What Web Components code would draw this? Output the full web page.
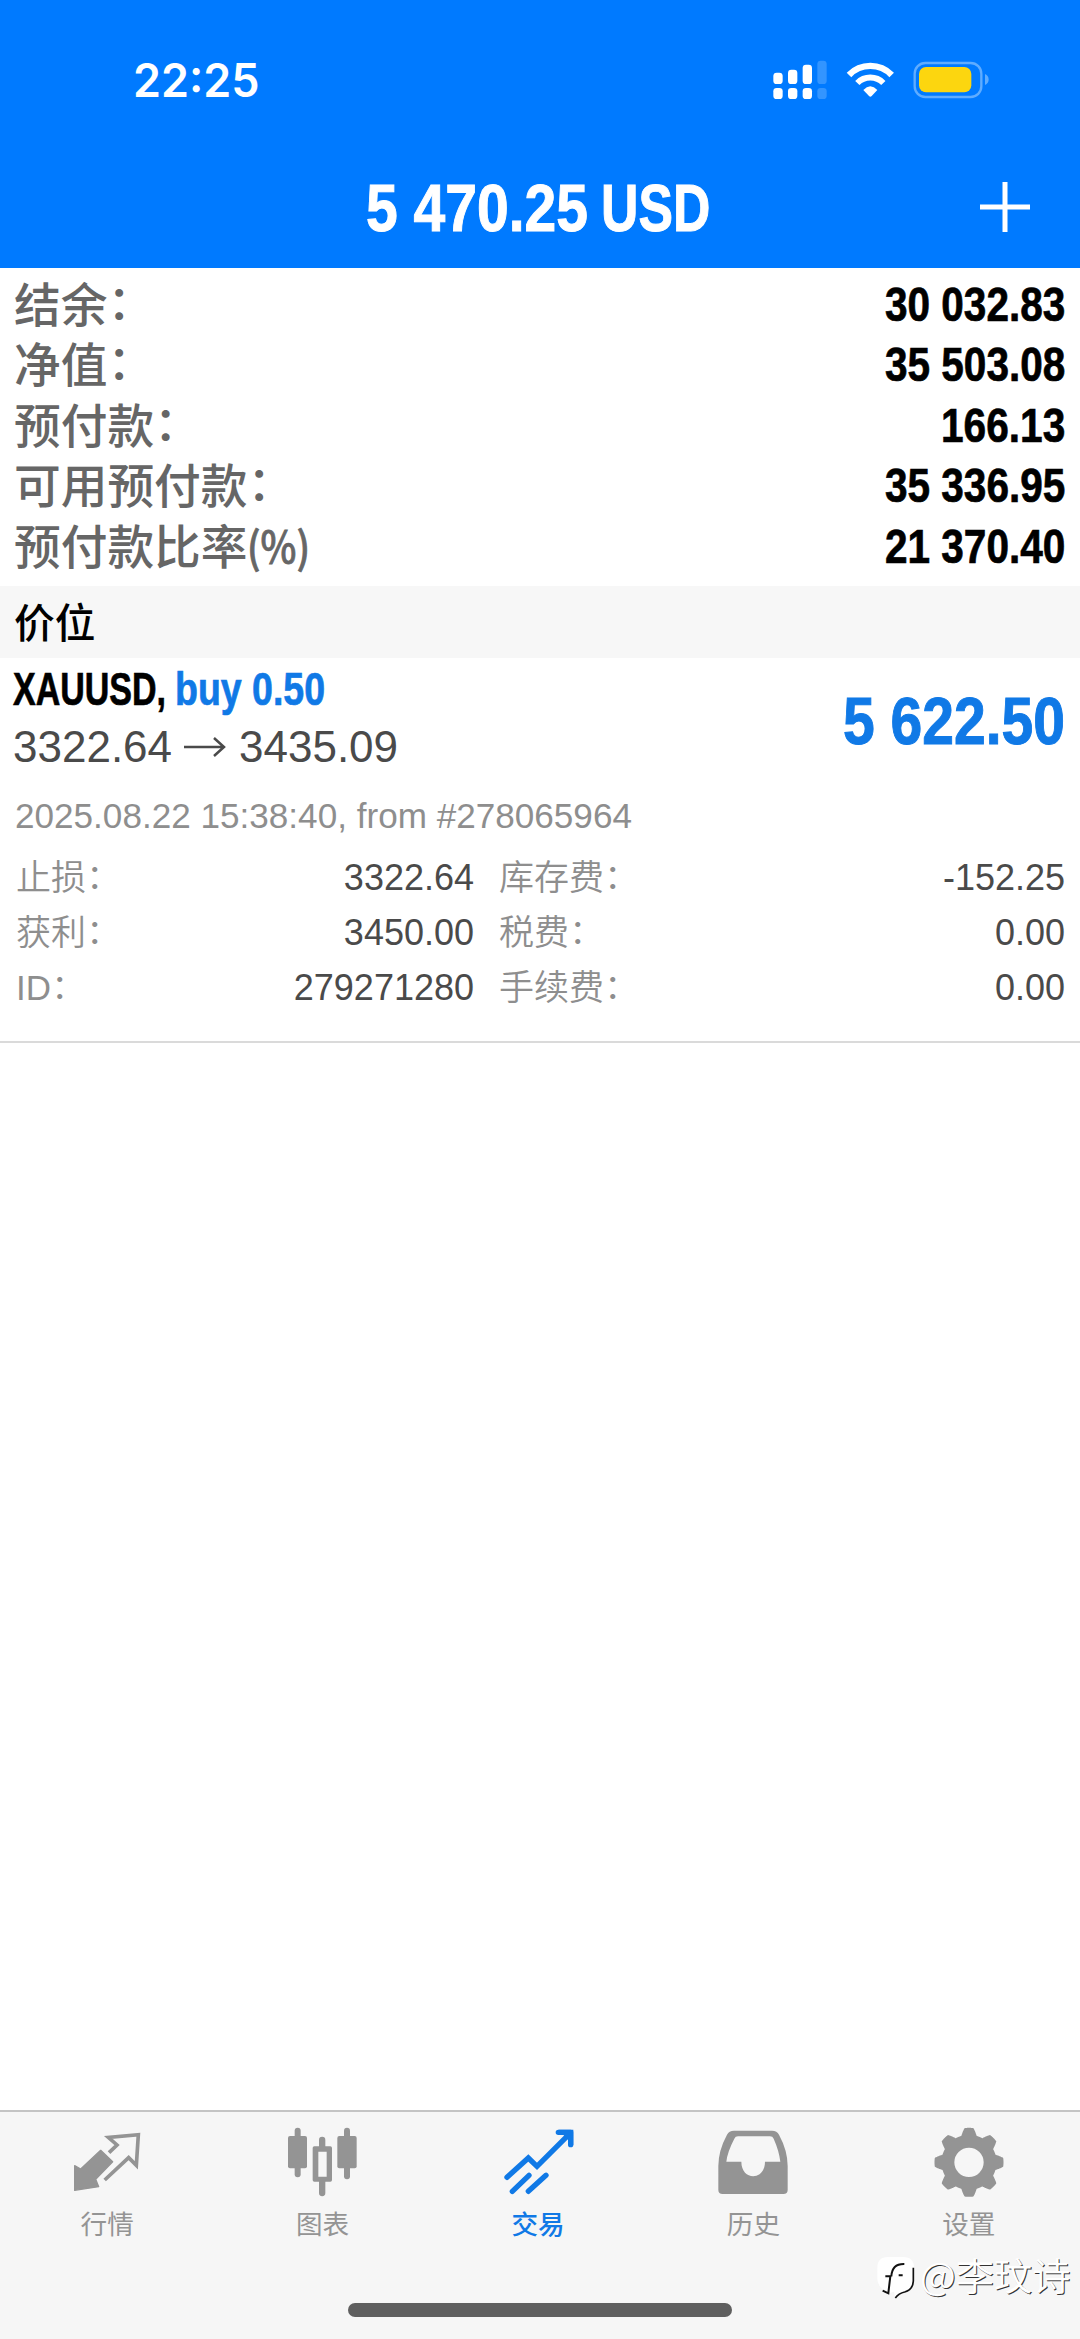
<!DOCTYPE html>
<html lang="zh-CN">
<head>
<meta charset="utf-8">
<title>交易</title>
<style>
html,body{margin:0;padding:0;background:#fff}
body{width:1080px;height:2339px;overflow:hidden;font-family:"Liberation Sans","Noto Sans CJK SC",sans-serif}
</style>
</head>
<body>
<trade-app></trade-app>
<script>
const define=(name,html,setup)=>customElements.define(name,class extends HTMLElement{
  connectedCallback(){
    if(this.shadowRoot)return;
    const t=document.createElement('template');
    t.innerHTML=html;
    this.attachShadow({mode:'open'}).append(t.content.cloneNode(true));
    if(setup)setup.call(this,this.shadowRoot);
  }
});

/* Text squeezed or stretched horizontally to the width given in "w". */
define('fit-text',`<style>
:host{display:block;flex:none;white-space:nowrap}
span{display:inline-block;transform-origin:0 50%;white-space:nowrap;-webkit-text-stroke:var(--embolden,0) currentColor}
</style><span></span>`,function(r){
  const s=r.querySelector('span'),w=+this.getAttribute('w');
  s.textContent=this.getAttribute('text');
  this.style.width=w+'px';
  s.style.transform='scaleX('+w/s.offsetWidth+')';
});

define('status-bar',`<style>
:host{display:flex;height:108px;box-sizing:border-box;padding:0 91px 0 133px;justify-content:space-between;color:#fff}
.time{font:600 46px/60px Inter,sans-serif;margin-top:50px}
svg{display:block;margin-top:60px}
</style>
<fit-text class="time" w="127" text="22:25"></fit-text>
<svg width="216" height="40" viewBox="100 60 648 120">
<g fill="#fff"><rect x="101" y="98" width="28" height="34" rx="10"/><rect x="145" y="89" width="28" height="43" rx="10"/><rect x="189" y="74" width="28" height="58" rx="10"/>
<rect x="101" y="144" width="28" height="33" rx="10"/><rect x="145" y="144" width="28" height="33" rx="10"/><rect x="189" y="144" width="28" height="33" rx="10"/></g>
<g fill="#fff" opacity=".2"><rect x="233" y="62" width="28" height="70" rx="10"/><rect x="233" y="144" width="28" height="33" rx="10"/></g>
<path d="M328 105A89 89 0 0 1 456 105" fill="none" stroke="#fff" stroke-width="19"/>
<path d="M353 129A55 55 0 0 1 431 129" fill="none" stroke="#fff" stroke-width="18"/>
<path d="M371 150Q392 128 413 150L396 168Q392 172 388 168Z" fill="#fff"/>
<rect x="525" y="69" width="200" height="102" rx="32" fill="none" stroke="#5facff" stroke-width="7"/>
<rect x="538" y="81" width="157" height="76" rx="21" fill="#fcd60f"/>
<path d="M736 102Q747 107 747 118.500Q747 130 736 135Z" fill="#5facff"/>
</svg>`);

define('nav-bar',`<style>
:host{display:grid;grid-template-columns:1fr auto 1fr;height:160px;color:#fff;align-items:start}
.sum{grid-column:2;display:flex;gap:13px;font:bold 66px/76px "Liberation Sans",sans-serif;margin:62px 0 0 -5px;--embolden:1px}
svg{justify-self:end;margin:74px 50px 0 0}
</style>
<div class="sum"><fit-text w="222" text="5 470.25"></fit-text><fit-text w="109" text="USD"></fit-text></div>
<svg width="50" height="50" viewBox="0 0 50 50"><path d="M25 0V50M0 25H50" stroke="#fff" stroke-width="5"/></svg>`);

define('account-summary',`<style>
:host{display:block;height:318px;box-sizing:border-box;padding-top:4px;background:#fff}
.row{display:flex;justify-content:space-between;height:60.4px;padding:0 15px 0 14px}
.l{font:500 46.700px/60px "Noto Sans CJK SC",sans-serif;color:#666;display:flex}
.l i{font-style:normal;vertical-align:3px;line-height:0}
.pct{font-size:43px;--embolden:.8px}
.v{font:bold 47.500px/60px "Liberation Sans",sans-serif;color:#000;margin-top:3px;--embolden:.7px}
</style>`,function(r){
  const rows=[['结余','30 032.83',180],['净值','35 503.08',180],['预付款','166.13',124],['可用预付款','35 336.95',180],['预付款比率','21 370.40',180]];
  r.append(...rows.map(([l,v,w],i)=>{
    const d=document.createElement('div');
    d.className='row';
    d.innerHTML=`<div class="l"><span>${l}${i<4?'<i>：</i>':''}</span>${i==4?'<fit-text class="pct" w="63" text="(%)"></fit-text>':''}</div><fit-text class="v" w="${w}" text="${v}"></fit-text>`;
    return d;
  }));
});

define('section-title',`<style>
:host{display:block;height:72px;background:#f7f7f7;padding-left:14px;font:500 40.700px/70px "Noto Sans CJK SC",sans-serif;color:#000}
</style><slot></slot>`);

define('detail-cell',`<style>
:host{display:flex;justify-content:space-between;height:54.8px;font:350 35px/54px "Liberation Sans","Noto Sans CJK SC",sans-serif;color:#8e8e8e}
i{font-style:normal;vertical-align:1px;line-height:0}
.v{font:36px/54px "Liberation Sans",sans-serif;color:#4a4a4a}
</style><span><slot></slot><i>：</i></span><span class="v"></span>`,function(r){r.querySelector('.v').textContent=this.getAttribute('value')});

define('position-card',`<style>
:host{display:block;height:385px;box-sizing:border-box;border-bottom:2px solid #dadada;background:#fff}
.top{display:flex;justify-content:space-between;height:118px;padding:0 15px 0 13px}
.sym{display:flex;gap:9px;font:bold 46px/54px "Liberation Sans",sans-serif;margin-top:4px;--embolden:.7px}
.buy{color:#1079e6}
.price{display:flex;align-items:center;font:44px/54px "Liberation Sans",sans-serif;color:#4a4a4a;margin-top:4px}
.price svg{margin:0 13px 0 12px}
.profit{font:bold 66px/76px "Liberation Sans",sans-serif;color:#1079e6;margin-top:25px;--embolden:1px}
.date{font:35px/44px "Liberation Sans",sans-serif;color:#8e8e8e;padding-left:15px;margin-top:18px}
.grid{display:grid;grid-template-columns:458px 1fr;column-gap:25px;padding:13px 15px 0 16px}
</style>
<div class="top"><div>
<div class="sym"><fit-text w="153" text="XAUUSD,"></fit-text><fit-text class="buy" w="150" text="buy 0.50"></fit-text></div>
<div class="price"><fit-text w="159" text="3322.64"></fit-text><svg width="42" height="22" viewBox="0 0 42 22"><path d="M0 11H40M30 2L40 11L30 20" fill="none" stroke="#4a4a4a" stroke-width="2.500"/></svg><fit-text w="159" text="3435.09"></fit-text></div>
</div><fit-text class="profit" w="222" text="5 622.50"></fit-text></div>
<div class="date"><fit-text w="617" text="2025.08.22 15:38:40, from #278065964"></fit-text></div>
<div class="grid">
<detail-cell value="3322.64">止损</detail-cell><detail-cell value="-152.25">库存费</detail-cell>
<detail-cell value="3450.00">获利</detail-cell><detail-cell value="0.00">税费</detail-cell>
<detail-cell value="279271280">ID</detail-cell><detail-cell value="0.00">手续费</detail-cell>
</div>`);

define('tab-item',`<style>
:host{display:flex;flex-direction:column;align-items:center;flex:1;color:#949494;font:400 26.600px/38px "Noto Sans CJK SC",sans-serif}
:host([active]){color:#1079e6;font-weight:500}
::slotted(svg){display:block;width:72px;height:72px;margin:13px 0 8px}
span{margin:-1px 1px 0 0}
</style><slot name="icon"></slot><span><slot></slot></span>`);

define('tab-bar',`<style>
:host{display:flex;flex-direction:column;height:229px;box-sizing:border-box;border-top:2px solid #c4c4c4;background:#f6f6f6}
.tabs{display:flex;width:1077px;height:191px}
.home{width:384px;height:14px;border-radius:7px;background:#5f5f5f;margin-left:348px}
</style>
<div class="tabs">
<tab-item><svg slot="icon" viewBox="215 105 216 216"><path d="M301 181L337 215L286 268L295 290L223 301V227L241 237Z" fill="currentColor" stroke="currentColor" stroke-width="4" stroke-linejoin="round"/><path d="M326 188L350 165L324 142L414 134L408 226L385 203L313 270" fill="none" stroke="currentColor" stroke-width="11"/></svg>行情</tab-item>
<tab-item><svg slot="icon" viewBox="861 105 216 216" fill="currentColor"><rect x="864" y="138" width="57" height="97" rx="6"/><rect x="884" y="113" width="18" height="149" rx="9"/><rect x="1012" y="138" width="58" height="97" rx="6"/><rect x="1032" y="113" width="18" height="155" rx="9"/><path fill-rule="evenodd" d="M943 169H991Q996 169 996 174V270Q996 275 991 275H943Q938 275 938 270V174Q938 169 943 169ZM955 185V260H980V185Z"/><path d="M957 172V150A9.500 9.500 0 0 1 976 150V172ZM957 272V309A9.500 9.500 0 0 0 976 309V272Z"/></svg>图表</tab-item>
<tab-item active><svg slot="icon" viewBox="427 105 216 216" fill="none" stroke="currentColor" stroke-width="16" stroke-linecap="round" stroke-linejoin="miter"><path d="M439 262L503 204L529 229L622 136"/><path d="M593 127H630V164" stroke-linejoin="round"/><path d="M612 127H630V146Z"/><path d="M455 304L505 256M503 304L556 256"/></svg>交易</tab-item>
<tab-item><svg slot="icon" viewBox="-6 105 216 216"><path fill="currentColor" fill-rule="evenodd" d="M42 122H156Q171 122 177 134Q203 182 203 228V300Q203 312 190 312H8Q-5 312 -5 300V228Q-5 182 21 134Q27 122 42 122ZM54 139Q46 139 43 146Q22 186 19 215H64C64 273 135 273 135 215H181Q177 182 161 146Q158 139 150 139Z"/></svg>历史</tab-item>
<tab-item><svg slot="icon" viewBox="640 105 216 216"><path id="gear" fill="currentColor" fill-rule="evenodd"/></svg>设置</tab-item>
</div><div class="home"></div>`,function(r){
  /* Eight-toothed gear: outline sampled in polar form, with a round hole. */
  const cx=748,cy=217,pts=[];
  for(let i=0;i<720;i++){
    const a=i*Math.PI/360,t=Math.max(-1,Math.min(1,Math.cos(8*a)*1.700+.1));
    const R=93+10.500*t;
    pts.push((cx+R*Math.cos(a)).toFixed(1)+' '+(cy+R*Math.sin(a)).toFixed(1));
  }
  r.getElementById('gear').setAttribute('d','M'+pts.join('L')+'Z M704 217a44 44 0 1 0 88 0a44 44 0 1 0 -88 0Z');
});

define('author-mark',`<style>
:host{position:absolute;left:876px;top:2247px;display:flex;align-items:center;gap:3px;color:#fff;font:350 38px/54px "Noto Sans CJK SC",sans-serif;text-shadow:1px 1px 0 #333}
svg{margin-top:8px}
</style>
<svg width="41" height="46" viewBox="36 40 123 138"><path d="M72 46H118Q150 46 150 78V118Q150 146 124 152Q104 156 94 170L90 150L74 155Q40 138 40 110V78Q40 46 72 46Z" fill="#fff"/><path d="M148 78V118Q147 144 122 151Q104 155 94 169" fill="none" stroke="#111" stroke-width="5"/><path d="M64 104H79Q76 128 73 155L56 147M82 104Q84 66 121 67M104 101H116" fill="none" stroke="#111" stroke-width="6"/></svg>
<fit-text w="151" text="@李玟诗"></fit-text>`);

define('trade-app',`<style>
:host{display:flex;flex-direction:column;width:1080px;height:2339px;background:#fff;position:relative}
header{background:#007aff;height:268px}
main{flex:1}
</style>
<header><status-bar></status-bar><nav-bar></nav-bar></header>
<main><account-summary></account-summary><section-title>价位</section-title><position-card></position-card></main>
<tab-bar></tab-bar><author-mark></author-mark>`);
</script>
</body>
</html>
